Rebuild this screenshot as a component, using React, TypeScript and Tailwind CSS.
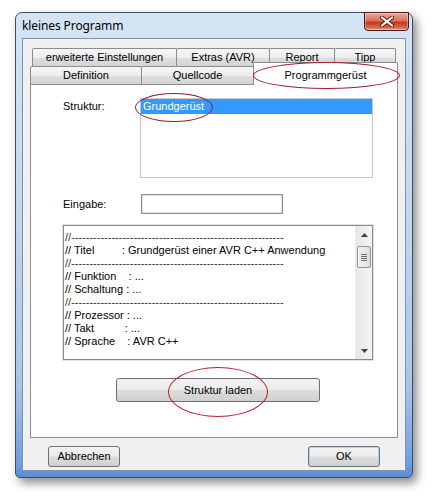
import React from "react";

const DASH = "//" + "-".repeat(58);

const MEMO_LINES = [
  DASH,
  "// Titel         : Grundgerüst einer AVR C++ Anwendung",
  DASH,
  "// Funktion    : ...",
  "// Schaltung : ...",
  DASH,
  "// Prozessor : ...",
  "// Takt          : ...",
  "// Sprache    : AVR C++",
];

const btn =
  "rounded-[3px] border border-[#707070] bg-[linear-gradient(to_bottom,#f3f3f3_0%,#ebebeb_48%,#dddddd_52%,#cfcfcf_100%)] flex items-center justify-center text-[11px] text-black";

function CloseButton() {
  return (
    <div className="-mr-[3px] -mt-px h-[19px] w-[45px] rounded-b-[4px] border border-[#4b1a14] bg-[linear-gradient(to_bottom,#e9a99c_0%,#d9705c_45%,#c23a22_55%,#d8654a_85%,#eaa083_100%)] flex items-center justify-center shadow-[inset_0_0_0_1px_rgba(255,255,255,0.35)]">
      <svg width="14" height="11" viewBox="0 0 14 11">
        <path d="M2 1.5 L12 9.5 M12 1.5 L2 9.5" stroke="#5a1d14" strokeWidth="4" strokeLinecap="round" />
        <path d="M2 1.5 L12 9.5 M12 1.5 L2 9.5" stroke="#ffffff" strokeWidth="2.2" strokeLinecap="round" />
      </svg>
    </div>
  );
}

function Tab({ label, w, active }: { label: string; w: string; active?: boolean }) {
  if (active) {
    return (
      <div
        className={`${w} relative z-10 -mb-px h-[23px] -ml-px border border-b-0 border-[#898c95] bg-white rounded-t-[2px] flex items-start justify-center pt-[4px]`}
      >
        {label}
      </div>
    );
  }
  return (
    <div
      className={`${w} h-[18px] -ml-px first:ml-0 border border-b-0 border-[#898c95] rounded-t-[2px] bg-[linear-gradient(to_bottom,#f6f6f6_0%,#ececec_50%,#dedede_51%,#d4d4d4_100%)] flex items-center justify-center`}
    >
      {label}
    </div>
  );
}

function ScrollBar() {
  return (
    <div className="w-[17px] h-full flex flex-col bg-[linear-gradient(to_right,#e6e6e6,#f5f5f5)] border-l border-[#ececec]">
      <div className="h-[17px] flex items-center justify-center">
        <svg width="7" height="4" viewBox="0 0 7 4">
          <path d="M0 4 L3.5 0 L7 4 Z" fill="#404040" />
        </svg>
      </div>
      <div className="mx-[1px] mt-[3px] h-[22px] rounded-[2px] border border-[#959595] bg-[linear-gradient(to_right,#f2f2f2,#dcdcdc)] flex flex-col items-center justify-center gap-[1px]">
        <div className="w-[6px] h-px bg-[#6d6d6d]" />
        <div className="w-[6px] h-px bg-[#6d6d6d]" />
        <div className="w-[6px] h-px bg-[#6d6d6d]" />
        <div className="w-[6px] h-px bg-[#6d6d6d]" />
      </div>
      <div className="flex-1" />
      <div className="h-[17px] flex items-center justify-center">
        <svg width="7" height="4" viewBox="0 0 7 4">
          <path d="M0 0 L3.5 4 L7 0 Z" fill="#404040" />
        </svg>
      </div>
    </div>
  );
}

export default function App() {
  return (
    <div className="relative w-[433px] h-[498px] bg-white pt-[12px] pl-[15px] font-['Liberation_Sans',Arial,sans-serif] text-[11px] text-black">
      <div className="w-[398px] h-[466px] rounded-t-[7px] rounded-b-[5px] border border-[#3c4c62] bg-[linear-gradient(to_bottom,#d5e4f5_0%,#c4d8f0_40%,#a9c6ea_80%,#6f9edc_97%,#5b8dd6_100%)] shadow-[4px_5px_10px_rgba(0,0,0,0.45)] flex flex-col px-[6px] pb-[6px]">
        <div className="h-[25px] flex items-start justify-between">
          <span className="mt-[6px] text-[12px] leading-[14px] font-['Noto_Sans','Liberation_Sans',sans-serif] tracking-[-0.1px]">
            kleines Programm
          </span>
          <CloseButton />
        </div>
        <div className="flex-1 bg-[#f0f0f0] border border-[#7d93b0] pt-[9px] px-[7px]">
          <div className="w-[368px]">
            <div className="flex h-[18px] pl-[2px]">
              <Tab label="erweiterte Einstellungen" w="w-[145px]" />
              <Tab label="Extras (AVR)" w="w-[94px]" />
              <Tab label="Report" w="w-[66px]" />
              <Tab label="Tipp" w="w-[62px]" />
            </div>
            <div className="flex h-[18px] items-end">
              <Tab label="Definition" w="w-[112px]" />
              <Tab label="Quellcode" w="w-[113px]" />
              <Tab label="Programmgerüst" w="w-[145px]" active />
            </div>
            <div className="h-[354px] border border-[#898c95] bg-white">
              <div className="flex mt-[13px] pl-[32px]">
                <div className="w-[77px] pt-[1px] leading-[14px]">Struktur:</div>
                <div className="w-[233px] h-[80px] border border-[#c9c9c9] bg-white">
                  <div className="h-[15px] bg-[#3399ff] text-white pl-[2px] leading-[15px]">Grundgerüst</div>
                </div>
              </div>
              <div className="flex items-center mt-[16px] pl-[32px]">
                <div className="w-[78px]">Eingabe:</div>
                <div className="w-[142px] h-[20px] border border-[#8e8f8f] bg-white shadow-[inset_0_0_0_1px_#e2e3ea]" />
              </div>
              <div className="mt-[11px] ml-[32px] w-[310px] h-[135px] border border-[#8a8a8a] shadow-[0_0_0_1px_#e3e3e3] bg-white flex">
                <div className="flex-1 pl-[1px] pt-[5px] leading-[13px] whitespace-pre">
                  {MEMO_LINES.map((l, i) => (
                    <div key={i} className={l === DASH ? "text-[#333333]" : ""}>
                      {l}
                    </div>
                  ))}
                </div>
                <ScrollBar />
              </div>
              <div className={`mt-[18px] ml-[85px] w-[204px] h-[24px] ${btn}`}>Struktur laden</div>
            </div>
            <div className="flex justify-between px-[18px] mt-[8px]">
              <div className={`w-[72px] h-[21px] ${btn}`}>Abbrechen</div>
              <div className={`w-[72px] h-[21px] ${btn} border-[#3c7fb1] shadow-[inset_0_0_0_1px_#a9d9f3]`}>OK</div>
            </div>
          </div>
        </div>
      </div>

      {/* red annotation ellipses */}
      <div className="absolute z-20 left-[253px] top-[62px] w-[147px] h-[27px] rounded-[50%] border border-[#a5202c]" />
      <div className="absolute z-20 left-[135px] top-[93px] w-[78px] h-[29px] rounded-[50%] border border-[#8a2030]" />
      <div className="absolute z-20 left-[168px] top-[367px] w-[100px] h-[50px] rounded-[50%] border border-[#b8202c]" />
    </div>
  );
}
